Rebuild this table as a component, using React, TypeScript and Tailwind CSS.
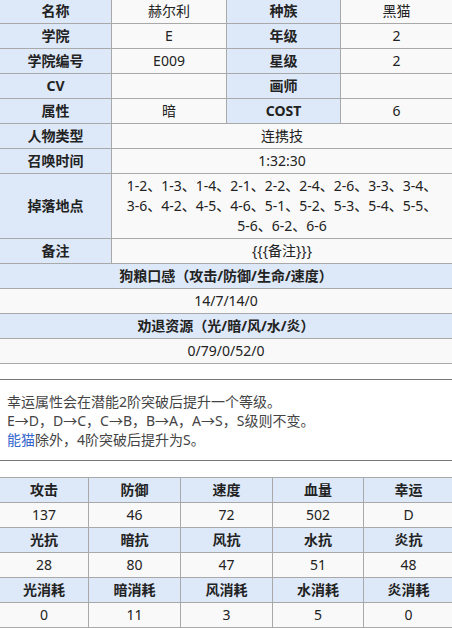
const FONT = "font-['Noto_Sans','Noto_Sans_CJK_SC',sans-serif]"

const th = 'border border-[#a9a9a9] bg-[#dde8f8] px-2 py-[2px] text-center font-bold leading-5 text-[#222]'
const td = 'border border-[#a9a9a9] bg-[#f9f9f9] px-2 py-[2px] text-center leading-5 text-[#222]'

type StatBlock = { heads: string[]; values: string[] }

const stats: StatBlock[] = [
  { heads: ['攻击', '防御', '速度', '血量', '幸运'], values: ['137', '46', '72', '502', 'D'] },
  { heads: ['光抗', '暗抗', '风抗', '水抗', '炎抗'], values: ['28', '80', '47', '51', '48'] },
  { heads: ['光消耗', '暗消耗', '风消耗', '水消耗', '炎消耗'], values: ['0', '11', '3', '5', '0'] },
]

const statWidths = ['w-[89px]', 'w-[92px]', 'w-[92px]', 'w-[91px]', 'w-[90px]']

function InfoTable() {
  return (
    <table className="-mt-[2px] -ml-px w-[454px] table-fixed border-collapse text-sm">
      <tbody>
        <tr>
          <th className={`${th} w-[112px]`}>名称</th>
          <td className={`${td} w-[115px]`}>赫尔利</td>
          <th className={`${th} w-[114px]`}>种族</th>
          <td className={td}>黑猫</td>
        </tr>
        <tr>
          <th className={th}>学院</th>
          <td className={td}>E</td>
          <th className={th}>年级</th>
          <td className={td}>2</td>
        </tr>
        <tr>
          <th className={th}>学院编号</th>
          <td className={td}>E009</td>
          <th className={th}>星级</th>
          <td className={td}>2</td>
        </tr>
        <tr>
          <th className={th}>CV</th>
          <td className={td}></td>
          <th className={th}>画师</th>
          <td className={td}></td>
        </tr>
        <tr>
          <th className={th}>属性</th>
          <td className={td}>暗</td>
          <th className={th}>COST</th>
          <td className={td}>6</td>
        </tr>
        <tr>
          <th className={th}>人物类型</th>
          <td className={td} colSpan={3}>连携技</td>
        </tr>
        <tr>
          <th className={th}>召唤时间</th>
          <td className={td} colSpan={3}>1:32:30</td>
        </tr>
        <tr>
          <th className={th}>掉落地点</th>
          <td className={`${td} px-1`} colSpan={3}>
            1-2、1-3、1-4、2-1、2-2、2-4、2-6、3-3、3-4、
            <br />
            3-6、4-2、4-5、4-6、5-1、5-2、5-3、5-4、5-5、
            <br />
            5-6、6-2、6-6
          </td>
        </tr>
        <tr>
          <th className={th}>备注</th>
          <td className={td} colSpan={3}>{'{{{备注}}}'}</td>
        </tr>
        <tr>
          <th className={th} colSpan={4}>狗粮口感（攻击/防御/生命/速度）</th>
        </tr>
        <tr>
          <td className={td} colSpan={4}>14/7/14/0</td>
        </tr>
        <tr>
          <th className={th} colSpan={4}>劝退资源（光/暗/风/水/炎）</th>
        </tr>
        <tr>
          <td className={td} colSpan={4}>0/79/0/52/0</td>
        </tr>
      </tbody>
    </table>
  )
}

function StatTable() {
  return (
    <table className="-ml-px w-[454px] table-fixed border-collapse text-sm">
      <tbody>
        {stats.map((block, i) => (
          <StatRows block={block} first={i === 0} key={i} />
        ))}
      </tbody>
    </table>
  )
}

function StatRows({ block, first }: { block: StatBlock; first: boolean }) {
  return (
    <>
      <tr>
        {block.heads.map((h, i) => (
          <th className={`${th} ${first ? statWidths[i] : ''}`} key={h}>
            {h}
          </th>
        ))}
      </tr>
      <tr>
        {block.values.map((v, i) => (
          <td className={td} key={i}>
            {v}
          </td>
        ))}
      </tr>
    </>
  )
}

export default function App() {
  return (
    <div className={`${FONT} h-[628px] w-[452px] overflow-hidden bg-white text-[#222]`}>
      <InfoTable />
      <hr className="mt-[15px] border-t border-[#777]" />
      <div className="px-[7px] pt-[12px] pb-[11px] text-sm leading-[19px] text-[#444]">
        <p>幸运属性会在潜能2阶突破后提升一个等级。</p>
        <p>E→D，D→C，C→B，B→A，A→S，S级则不变。</p>
        <p>
          <span className="text-[#3366cc]">能猫</span>除外，4阶突破后提升为S。
        </p>
      </div>
      <hr className="border-t border-[#777]" />
      <div className="mt-[16px]">
        <StatTable />
      </div>
    </div>
  )
}
